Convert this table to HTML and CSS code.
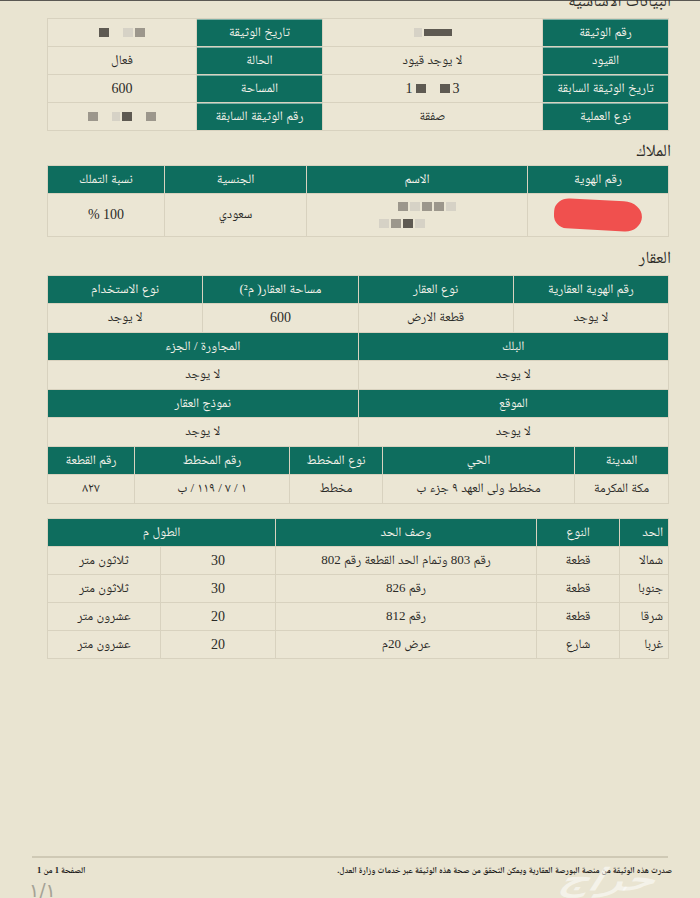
FILE: index.html
```html
<!DOCTYPE html>
<html lang="ar">
<head>
<meta charset="utf-8">
<title>وثيقة عقارية</title>
<link rel="stylesheet" href="styles.css">
</head>
<body>
<div class="topline"></div>
<div class="page">
  <h2 class="sec sec-first">البيانات الأساسية</h2>
  <div class="tbl">
    <div class="row c4a">
      <div class="h">رقم الوثيقة</div>
      <div class="v"><span class="blk b-dark w28"></span><span class="blk b-light w8"></span></div>
      <div class="h">تاريخ الوثيقة</div>
      <div class="v"><span class="blk b-mid w10"></span><span class="blk b-light w10"></span><span class="gapx"></span><span class="blk b-dark w10"></span></div>
    </div>
    <div class="row c4a">
      <div class="h">القيود</div>
      <div class="v">لا يوجد قيود</div>
      <div class="h">الحالة</div>
      <div class="v">فعال</div>
    </div>
    <div class="row c4a">
      <div class="h">تاريخ الوثيقة السابقة</div>
      <div class="v"><span class="num">3</span><span class="blk b-dark w10"></span><span class="gapx"></span><span class="blk b-dark w10"></span><span class="num">1</span></div>
      <div class="h">المساحة</div>
      <div class="v num">600</div>
    </div>
    <div class="row c4a">
      <div class="h">نوع العملية</div>
      <div class="v">صفقة</div>
      <div class="h">رقم الوثيقة السابقة</div>
      <div class="v"><span class="blk b-mid w10"></span><span class="gapx"></span><span class="blk b-dark w10"></span><span class="blk b-light w8"></span><span class="gapx"></span><span class="blk b-mid w10"></span></div>
    </div>
  </div>

  <h2 class="sec">الملاك</h2>
  <div class="tbl">
    <div class="row c-own">
      <div class="h">رقم الهوية</div>
      <div class="h">الاسم</div>
      <div class="h">الجنسية</div>
      <div class="h">نسبة التملك</div>
    </div>
    <div class="row c-own tall">
      <div class="v"><span class="redblob"></span></div>
      <div class="v name">
        <span class="nm1"><span class="blk b-light w10"></span><span class="blk b-mid w10"></span><span class="blk b-mid w10"></span><span class="blk b-light w10"></span><span class="blk b-mid w10"></span></span>
        <span class="nm2"><span class="blk b-light w10"></span><span class="blk b-dark w10"></span><span class="blk b-mid w10"></span><span class="blk b-light w10"></span></span>
      </div>
      <div class="v">سعودي</div>
      <div class="v num">100 %</div>
    </div>
  </div>

  <h2 class="sec sec-prop">العقار</h2>
  <div class="tbl">
    <div class="row c4">
      <div class="h">رقم الهوية العقارية</div>
      <div class="h">نوع العقار</div>
      <div class="h">مساحة العقار( م²)</div>
      <div class="h">نوع الاستخدام</div>
    </div>
    <div class="row c4 d">
      <div class="v">لا يوجد</div>
      <div class="v">قطعة الارض</div>
      <div class="v num">600</div>
      <div class="v">لا يوجد</div>
    </div>
    <div class="row c2">
      <div class="h">البلك</div>
      <div class="h">المجاورة / الجزء</div>
    </div>
    <div class="row c2 d">
      <div class="v">لا يوجد</div>
      <div class="v">لا يوجد</div>
    </div>
    <div class="row c2">
      <div class="h">الموقع</div>
      <div class="h">نموذج العقار</div>
    </div>
    <div class="row c2 d">
      <div class="v">لا يوجد</div>
      <div class="v">لا يوجد</div>
    </div>
    <div class="row c5">
      <div class="h">المدينة</div>
      <div class="h">الحي</div>
      <div class="h">نوع المخطط</div>
      <div class="h">رقم المخطط</div>
      <div class="h">رقم القطعة</div>
    </div>
    <div class="row c5 d">
      <div class="v">مكة المكرمة</div>
      <div class="v">مخطط ولى العهد ٩ جزء ب</div>
      <div class="v">مخطط</div>
      <div class="v">١ / ٧ / ١١٩ / ب</div>
      <div class="v">٨٢٧</div>
    </div>
  </div>

  <div class="tbl bounds">
    <div class="row cb">
      <div class="h">الحد</div>
      <div class="h">النوع</div>
      <div class="h">وصف الحد</div>
      <div class="h span2">الطول م</div>
    </div>
    <div class="row cb d">
      <div class="v">شمالا</div>
      <div class="v">قطعة</div>
      <div class="v">رقم 803 وتمام الحد القطعة رقم 802</div>
      <div class="v num">30</div>
      <div class="v">ثلاثون متر</div>
    </div>
    <div class="row cb d">
      <div class="v">جنوبا</div>
      <div class="v">قطعة</div>
      <div class="v">رقم 826</div>
      <div class="v num">30</div>
      <div class="v">ثلاثون متر</div>
    </div>
    <div class="row cb d">
      <div class="v">شرقا</div>
      <div class="v">قطعة</div>
      <div class="v">رقم 812</div>
      <div class="v num">20</div>
      <div class="v">عشرون متر</div>
    </div>
    <div class="row cb d">
      <div class="v">غربا</div>
      <div class="v">شارع</div>
      <div class="v">عرض 20م</div>
      <div class="v num">20</div>
      <div class="v">عشرون متر</div>
    </div>
  </div>
</div>

<footer class="foot">
  <div class="foot-row">
    <span class="foot-note">صدرت هذه الوثيقة من منصة البورصة العقارية ويمكن التحقق من صحة هذه الوثيقة عبر خدمات وزارة العدل.</span>
    <span class="foot-page">الصفحة 1 من 1</span>
  </div>
  <div class="pagenum">١/١</div>
  <div class="watermark">حراج</div>
</footer>
</body>
</html>
```
FILE: styles.css
```css
html, body {
  margin: 0;
  padding: 0;
}
body {
  background: #e9e4d1;
  width: 700px;
  height: 898px;
  overflow: hidden;
  position: relative;
  font-family: "Liberation Serif", "Noto Naskh Arabic", "Amiri", "DejaVu Sans", serif;
  color: #2b2b28;
}
.topline {
  height: 1px;
  background: #5a5853;
}
.page {
  width: 622px;
  margin-left: 47px;
  direction: rtl;
}
.sec {
  margin: 0;
  font-weight: normal;
  font-size: 17px;
  line-height: 22px;
  height: 22px;
  color: #2d2c28;
  margin-right: -2px;
}
.sec-first {
  margin-top: -11px;
  margin-bottom: 6px;
}
.sec:not(.sec-first) {
  margin-top: 9px;
  margin-bottom: 3px;
}
.sec.sec-prop {
  margin-top: 10px;
  margin-bottom: 6px;
}
.tbl {
  background: #d8d2bf;
  padding: 1px;
  display: flex;
  flex-direction: column;
  gap: 1px;
}
.row {
  display: grid;
  gap: 1px;
  height: 27px;
}
.row.d { height: 28px; }
.row.tall { height: 42px; }
.h, .v {
  display: flex;
  align-items: center;
  justify-content: center;
  font-size: 13px;
  white-space: nowrap;
}
.h {
  background: #0e6d5e;
  color: #f4f2ea;
}
.v {
  background: #ebe6d4;
}
.c4a { grid-template-columns: 125px 219px 125px 1fr; }
.c4a .h { border-top: 1px solid #7fb0a6; }
.c-own { grid-template-columns: 140px 220px 141px 1fr; }
.c4 { grid-template-columns: repeat(4, 1fr); }
.c2 { grid-template-columns: repeat(2, 1fr); }
.c5 { grid-template-columns: 93px 191px 92px 154px 1fr; }
.cb { grid-template-columns: 48px 82px 260px 114px 1fr; }
.span2 { grid-column: span 2; }
.cb .h:first-child, .cb .v:first-child { justify-content: flex-start; padding-right: 5px; }
.bounds { margin-top: 14px; }
.bounds .row.d { height: 27px; }
.num { font-size: 14px; }
.blk {
  display: inline-block;
  height: 9px;
  margin: 0 1px;
}
.w8 { width: 8px; }
.w10 { width: 10px; }
.w28 { width: 28px; height: 7px; }
.gapx { display: inline-block; width: 12px; }
.b-dark { background: #5e5a52; }
.b-mid { background: #9c978c; }
.b-light { background: #d6d2c6; }
.v .num { margin: 0 2px; }
.redblob {
  display: block;
  width: 88px;
  height: 30px;
  background: #f0504e;
  border-radius: 16px 20px 18px 14px / 14px 16px 16px 14px;
  transform: rotate(3deg);
}
.name {
  flex-direction: column;
  gap: 8px;
}
.nm1 { display: flex; margin-left: 20px; }
.nm2 { display: flex; margin-right: 30px; }
.foot {
  position: absolute;
  left: 0;
  right: 0;
  top: 856px;
  height: 42px;
}
.foot-row {
  margin-left: 32px;
  width: 631px;
  padding-left: 5px;
  border-top: 2px solid #cfc9b5;
  display: flex;
  justify-content: space-between;
  align-items: center;
  direction: rtl;
  padding-top: 6px;
  font-size: 8.5px;
  color: #1d1c1a;
  font-weight: bold;
}
.foot-note { margin-right: -4px; }
.pagenum {
  font-family: "DejaVu Sans", sans-serif;
  font-size: 19px;
  color: #a5a296;
  margin-left: 29px;
  margin-top: 2px;
  line-height: 20px;
}
.watermark {
  position: absolute;
  left: 565px;
  top: 6px;
  font-family: "DejaVu Sans", sans-serif;
  font-weight: bold;
  font-style: italic;
  font-size: 30px;
  color: rgba(255, 255, 255, 0.55);
  line-height: 36px;
  transform: skewX(-15deg) scaleX(1.5);
  transform-origin: left top;
}
```
